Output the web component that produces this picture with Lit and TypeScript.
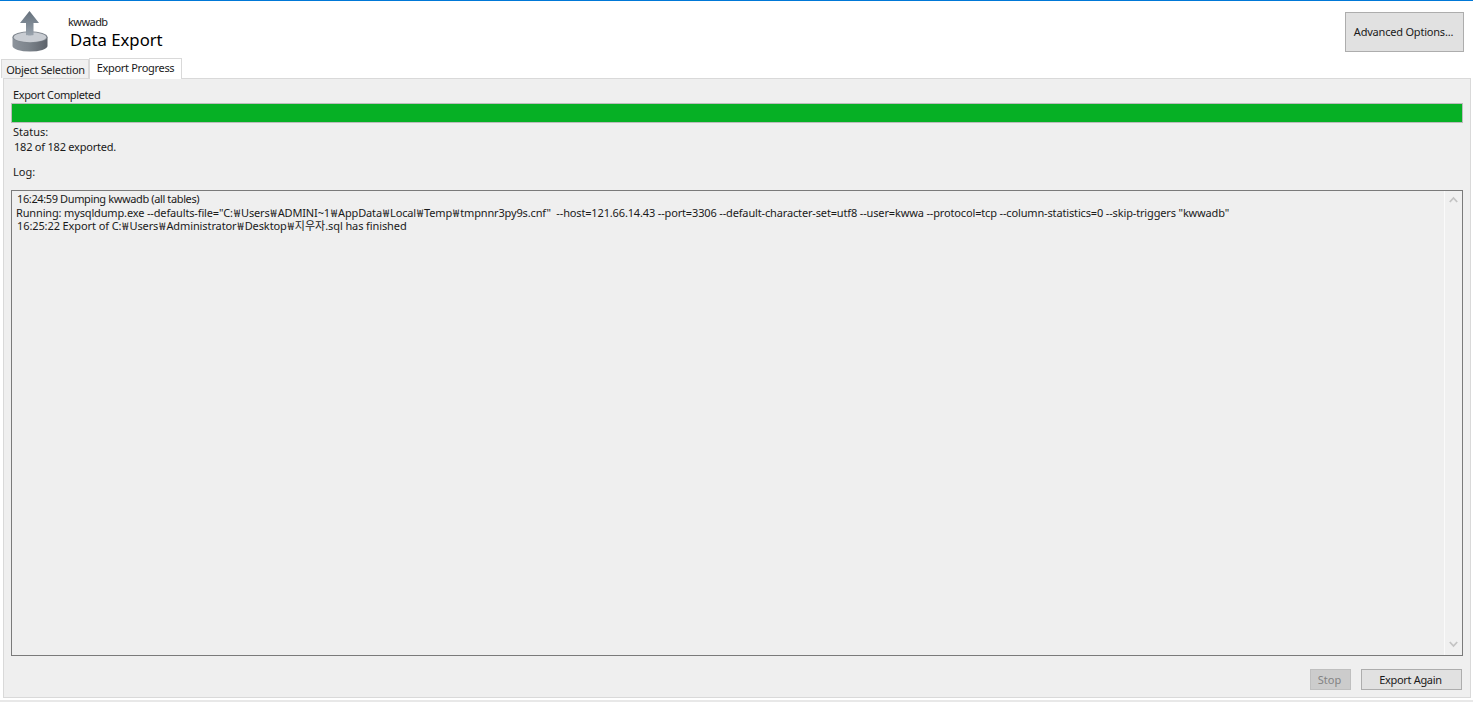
import { LitElement, html, css } from "lit";
import { customElement } from "lit/decorators.js";

const LOG_LINES = [
  { cls: "l1", text: `16:24:59 Dumping kwwadb (all tables)` },
  { cls: "l2", text: `Running: mysqldump.exe --defaults-file="C:₩Users₩ADMINI~1₩AppData₩Local₩Temp₩tmpnnr3py9s.cnf"  --host=121.66.14.43 --port=3306 --default-character-set=utf8 --user=kwwa --protocol=tcp --column-statistics=0 --skip-triggers "kwwadb"` },
  { cls: "l3", text: `16:25:22 Export of C:₩Users₩Administrator₩Desktop₩지우자.sql has finished` },
];

@customElement("app-root")
export class AppRoot extends LitElement {
  static styles = css`
    :host {
      display: flex;
      flex-direction: column;
      width: 1473px;
      height: 702px;
      overflow: hidden;
      background: #fff;
      border-top: 1px solid #0078d7;
      box-sizing: border-box;
      font-family: "Noto Sans", "Noto Sans CJK KR", sans-serif;
      font-size: 11px;
      line-height: 14px;
      color: #1a1a1a;
    }
    .head {
      height: 57px;
      flex: none;
      display: flex;
      align-items: flex-start;
      padding: 0 9px 0 11px;
    }
    .logo { width: 38px; height: 42px; margin-top: 9px; flex: none; }
    .titles { margin-left: 19px; flex: 1; padding-top: 14px; }
    .db { font-size: 11px; line-height: 13px; letter-spacing: -0.55px; }
    .title { font-size: 16.7px; line-height: 22px; margin: 1px 0 0 2px; color: #000; }
    .adv {
      margin-top: 11px;
      width: 119px;
      height: 40px;
      box-sizing: border-box;
      background: #e1e1e1;
      border: 1px solid #adadad;
      display: flex;
      align-items: center;
      justify-content: center;
      letter-spacing: -0.2px;
      padding-right: 2px;
    }
    .tabs {
      flex: none;
      height: 20px;
      display: flex;
      align-items: flex-end;
      padding-left: 1px;
      position: relative;
      z-index: 1;
    }
    .tab {
      box-sizing: border-box;
      height: 19px;
      width: 88px;
      background: #f0f0f0;
      border: 1px solid #d9d9d9;
      border-bottom: 0;
      text-align: center;
      line-height: 19px;
      letter-spacing: -0.3px;
      padding-left: 1px;
    }
    .tab.on {
      height: 21px;
      width: 93px;
      background: #fff;
      line-height: 17px;
      margin-bottom: -1px;
      padding-left: 0;
    }
    .panel {
      margin-left: 3px;
      width: 1468px;
      height: 620px;
      flex: none;
      box-sizing: border-box;
      background: #efefef;
      border: 1px solid #d9d9d9;
      display: flex;
      flex-direction: column;
      padding: 9px 7px 0 7px;
    }
    .lab { padding-left: 2px; height: 14px; }
    .completed { letter-spacing: -0.38px; }
    .bar {
      margin-top: 1px;
      height: 20px;
      box-sizing: border-box;
      flex: none;
      background: #06b025;
      border: 1px solid #bcbcbc;
    }
    .status { margin-top: 2px; }
    .val { padding-left: 3px; margin-top: 1px; letter-spacing: -0.22px; }
    .loglab { margin-top: 11px; }
    .log {
      margin-top: 11px;
      height: 466px;
      flex: none;
      box-sizing: border-box;
      border: 1px solid #7a7a7a;
      display: flex;
    }
    .text { flex: 1; padding: 1px 4px; white-space: pre; line-height: 13.5px; }
    .l1 { padding-left: 1px; letter-spacing: -0.38px; }
    .l2 { letter-spacing: -0.15px; }
    .l3 { padding-left: 1px; letter-spacing: -0.1px; }
    .k { font-family: "Noto Sans CJK KR", sans-serif; letter-spacing: 0; }
    .w { padding: 0 1px; }
    .sb {
      width: 17px;
      flex: none;
      background: #f0f0f0;
      border-left: 1px solid #fafafa;
      display: flex;
      flex-direction: column;
      justify-content: space-between;
      align-items: center;
      padding: 5px 0 7px;
    }
    .sb svg { width: 9px; height: 7px; display: block; }
    .foot {
      display: flex;
      justify-content: flex-end;
      margin-top: 13px;
      gap: 10px;
      padding-right: 1px;
    }
    .btn {
      height: 21px;
      box-sizing: border-box;
      width: 101px;
      background: #e1e1e1;
      border: 1px solid #adadad;
      display: flex;
      align-items: center;
      justify-content: center;
      letter-spacing: -0.33px;
      padding-right: 2px;
    }
    .btn.off {
      width: 41px;
      background: #ccc;
      border-color: #bfbfbf;
      color: #838383;
      letter-spacing: 0;
    }
    .edge {
      flex: none;
      margin-top: 2px;
      height: 2px;
      background: #e8e8e8;
    }
  `;

  private line(text: string) {
    return text.split(/(₩|지우자)/).map((part) =>
      part === "₩"
        ? html`<span class="k w">${part}</span>`
        : part === "지우자"
          ? html`<span class="k">${part}</span>`
          : part
    );
  }

  render() {
    return html`
      <div class="head">
        <svg class="logo" viewBox="0 0 38 42">
          <defs>
            <linearGradient id="ar" x1="0" y1="0" x2="0" y2="1">
              <stop offset="0" stop-color="#66717c" />
              <stop offset="0.55" stop-color="#7f8a95" />
              <stop offset="1" stop-color="#9aa3ad" />
            </linearGradient>
            <linearGradient id="cy" x1="0" y1="0" x2="1" y2="0">
              <stop offset="0" stop-color="#8d949c" />
              <stop offset="0.45" stop-color="#7d848c" />
              <stop offset="1" stop-color="#5c626a" />
            </linearGradient>
          </defs>
          <path d="M1.5 27 V36 A17.5 5.5 0 0 0 36.5 36 V27 Z" fill="url(#cy)" />
          <ellipse cx="19" cy="27" rx="17.5" ry="5.8" fill="#7d848c" />
          <ellipse cx="19" cy="27.2" rx="16.2" ry="5" fill="#c9cdd3" />
          <path d="M18.5 1 L28 13 H22.5 V25 C21 25.6 16.5 25.6 15 25 V13 H9 Z" fill="url(#ar)" />
        </svg>
        <div class="titles">
          <div class="db">kwwadb</div>
          <div class="title">Data Export</div>
        </div>
        <div class="adv">Advanced Options...</div>
      </div>
      <div class="tabs">
        <div class="tab">Object Selection</div>
        <div class="tab on">Export Progress</div>
      </div>
      <div class="panel">
        <div class="lab completed">Export Completed</div>
        <div class="bar"></div>
        <div class="lab status">Status:</div>
        <div class="lab val">182 of 182 exported.</div>
        <div class="lab loglab">Log:</div>
        <div class="log">
          <div class="text">${LOG_LINES.map((l) => html`<div class=${l.cls}>${this.line(l.text)}</div>`)}</div>
          <div class="sb">
            <svg viewBox="0 0 9 7"><path d="M0.8 6 L4.5 2 L8.2 6" fill="none" stroke="#c4c4c4" stroke-width="1.8" /></svg>
            <svg viewBox="0 0 9 7"><path d="M0.8 1 L4.5 5 L8.2 1" fill="none" stroke="#c4c4c4" stroke-width="1.8" /></svg>
          </div>
        </div>
        <div class="foot">
          <div class="btn off">Stop</div>
          <div class="btn">Export Again</div>
        </div>
      </div>
      <div class="edge"></div>
    `;
  }
}
